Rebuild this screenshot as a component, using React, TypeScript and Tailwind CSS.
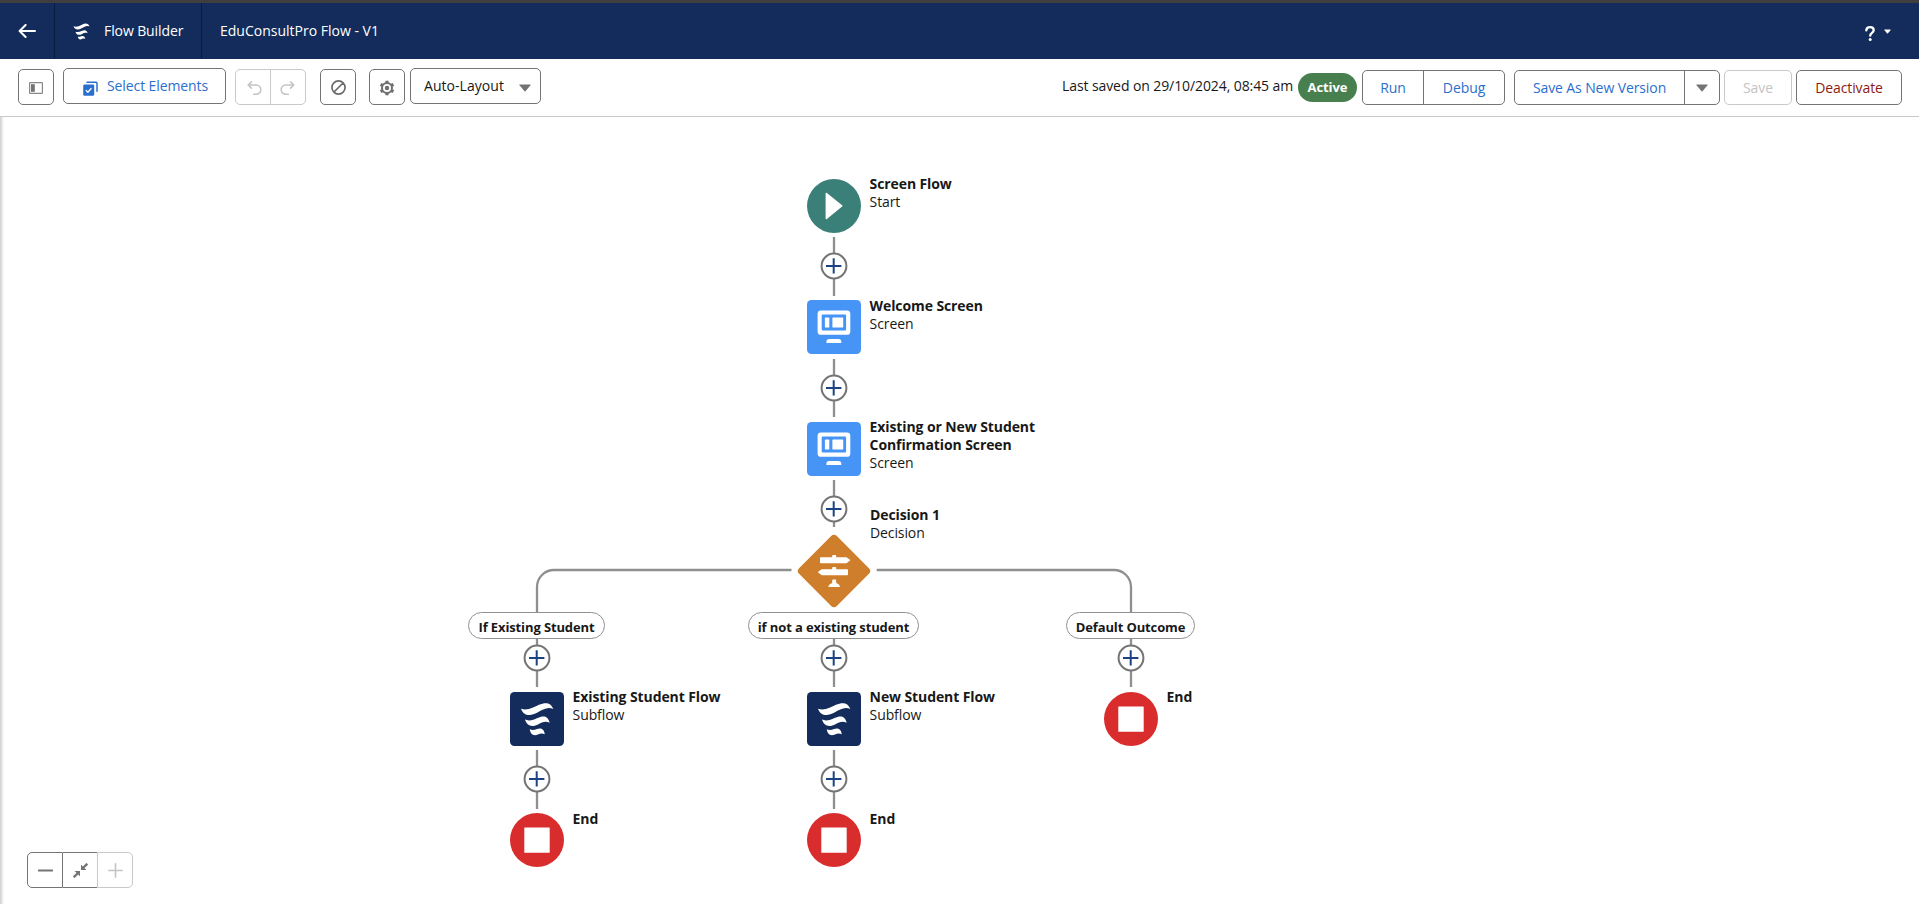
import type { ReactNode } from "react";

const WAVES = [
  "M11 16.7C17 19 24 15.5 29 12.8C35.5 10 41 10.5 43.3 17C37.5 14.5 33 17.5 27.5 20.5C20.5 24.5 13.5 24 11 16.7Z",
  "M15 27.6C19 29.3 23.5 28 27.5 26C33 23.5 38 23.5 39.7 30.8C35.5 28.6 32 30.3 28.5 32.2C22.5 35.5 17 34.5 15 27.6Z",
  "M19.7 37.3C22 38.3 24.5 38 27 37C30.5 35.8 34 36.5 34.8 42.3C32.5 41.3 30.5 41.3 28 42.5C23.5 44.5 20.5 42.5 19.7 37.3Z",
];

function Waves() {
  return (
    <>
      {WAVES.map((d) => (
        <path key={d} d={d} fill="#fff" />
      ))}
    </>
  );
}

function Caret({ className = "" }: { className?: string }) {
  return (
    <svg viewBox="0 0 12 8" className={`h-2 w-3 ${className}`}>
      <path d="M.9.4h10.2c.5 0 .7.5.4.9L6.5 7.3a.7.7 0 0 1-1 0L.5 1.3C.2.9.4.4.9.4Z" fill="currentColor" />
    </svg>
  );
}

type Kind = "start" | "screen" | "subflow" | "end";

function NodeIcon({ kind }: { kind: Kind }) {
  return (
    <svg viewBox="0 0 54 54" className="block h-[54px] w-[54px]">
      {kind === "start" && (
        <>
          <circle cx="27" cy="27" r="27" fill="#3a8079" />
          <path d="M18.6 14.6c0-.8.8-1 1.3-.6l15.2 12.2c.5.4.5 1 0 1.4L19.9 40c-.5.4-1.3.2-1.3-.6Z" fill="#fff" />
        </>
      )}
      {kind === "screen" && (
        <>
          <rect width="54" height="54" rx="4.5" fill="#4794f7" />
          <rect x="10.6" y="10.4" width="32.7" height="24.4" rx="3.4" fill="#fff" />
          <rect x="14.7" y="14.6" width="24.4" height="15.8" rx="1" fill="#4794f7" />
          <rect x="17.9" y="17.6" width="4.4" height="10" rx=".7" fill="#fff" />
          <rect x="25.4" y="17.6" width="10.8" height="10" rx=".7" fill="#fff" />
          <path d="M19.4 42.9v-1.2a2.8 2.8 0 0 1 2.8-2.8h9.3a2.8 2.8 0 0 1 2.8 2.8v1.2Z" fill="#fff" />
        </>
      )}
      {kind === "subflow" && (
        <>
          <rect width="54" height="54" rx="4.5" fill="#132c5b" />
          <Waves />
        </>
      )}
      {kind === "end" && (
        <>
          <circle cx="27" cy="27" r="27" fill="#d92d2d" />
          <rect x="14.3" y="14.4" width="25.4" height="25.4" rx=".6" fill="#fff" />
        </>
      )}
    </svg>
  );
}

function FlowNode({
  kind,
  title,
  sub,
  pos,
  label = "-mt-1",
}: {
  kind: Kind;
  title: ReactNode;
  sub?: string;
  pos: string;
  label?: string;
}) {
  return (
    <div className={`absolute flex ${pos}`}>
      <NodeIcon kind={kind} />
      <div className={`ml-[9px] leading-[18px] whitespace-nowrap ${label}`}>
        <div className="font-bold">{title}</div>
        {sub && <div>{sub}</div>}
      </div>
    </div>
  );
}

function Plus({ pos }: { pos: string }) {
  return (
    <svg viewBox="0 0 28 28" className={`absolute h-7 w-7 ${pos}`}>
      <circle cx="14" cy="14" r="12.4" fill="#fff" stroke="#747474" strokeWidth="2" />
      <path d="M13.7 6.2v15.4M6 13.9h15.4" stroke="#1b4384" strokeWidth="2" />
    </svg>
  );
}

function Pill({ pos, children }: { pos: string; children: ReactNode }) {
  return (
    <div
      className={`absolute flex h-[27px] items-center justify-center rounded-full border border-[#919191] bg-white pt-[3px] text-[13px] leading-[18px] font-bold tracking-[-0.12px] whitespace-nowrap ${pos}`}
    >
      {children}
    </div>
  );
}

const box = "flex items-center justify-center rounded-[5px] border border-[#747474] bg-white";

function Header() {
  return (
    <header className="flex h-[59px] items-stretch border-t-[3px] border-[#3f3f3f] bg-[#132c5b] text-white">
      <div className="flex w-[55px] items-center justify-center border-r border-[#071c42]">
        <svg viewBox="0 0 18 14" className="h-[14px] w-[18px]">
          <path d="M7.6 1 1.6 7l6 6M2 7h15" fill="none" stroke="#fff" strokeWidth="2" strokeLinecap="round" strokeLinejoin="round" />
        </svg>
      </div>
      <div className="flex w-[147px] items-center border-r border-[#071c42] pl-[18px]">
        <svg viewBox="10.5 10 33.4 34.4" className="h-[17px] w-[17px]">
          <Waves />
        </svg>
        <span className="mb-[2px] ml-[14px]">Flow Builder</span>
      </div>
      <div className="flex items-center pb-[2px] pl-[18px] tracking-[0px]">EduConsultPro Flow - V1</div>
      <div className="ml-auto flex items-center pt-[4px] pr-[28px]">
        <svg viewBox="0 0 10 15" className="h-[15px] w-[10px]">
          <path d="M1.3 4.3C1.5 2.3 3 1.2 5 1.2c2.2 0 3.7 1.2 3.7 3 0 2.6-3.5 2.7-3.5 5.5" fill="none" stroke="#fff" strokeWidth="2.3" strokeLinecap="round" />
          <circle cx="5.2" cy="13.4" r="1.5" fill="#fff" />
        </svg>
        <Caret className="mb-[3px] ml-[9px] h-[5px]! w-[7px]!" />
      </div>
    </header>
  );
}

function Toolbar() {
  return (
    <div className="flex h-[58px] items-start border-b border-[#c9c9c9] bg-white pr-[17px] pl-[18px]">
      <div className={`mt-[10px] h-9 w-9 ${box}`}>
        <svg viewBox="0 0 14 12" className="mt-[2px] h-3 w-[14px] text-[#747474]">
          <rect x=".6" y=".6" width="12.8" height="10.8" rx=".6" fill="none" stroke="currentColor" strokeWidth="1.2" opacity=".85" />
          <rect x="2" y="2.2" width="3.8" height="7.6" fill="currentColor" />
        </svg>
      </div>
      <div className={`mt-[9px] ml-[9px] h-9 w-[163px] justify-start! pl-[19px] text-[#2b6fce] ${box}`}>
        <svg viewBox="0 0 15 15" className="mt-[4px] h-[15px] w-[15px]">
          <path d="M4 1.2h9a1 1 0 0 1 1 1v8" fill="none" stroke="currentColor" strokeWidth="1.5" strokeLinecap="round" />
          <rect x=".2" y="3.6" width="11" height="11.2" rx="1.4" fill="currentColor" />
          <path d="m2.9 9.3 2 2 3.5-4" fill="none" stroke="#fff" strokeWidth="1.3" />
        </svg>
        <span className="-mt-px ml-[9px]">Select Elements</span>
      </div>
      <div className="mt-[10px] ml-[9px] flex h-9 w-[71px] rounded-[5px] border border-[#c9c9c9] text-[#c4c4c4]">
        <div className="flex w-[35px] items-center justify-center border-r border-[#c9c9c9]">
          <svg viewBox="0 0 15 15" className="mt-[2px] ml-[2px] h-[15px] w-[15px]">
            <path d="M4.4.9 1.2 4l3.2 3.1M1.6 4h7.6a4.6 4.6 0 0 1 0 9.2H6.7" fill="none" stroke="currentColor" strokeWidth="1.6" strokeLinecap="round" strokeLinejoin="round" />
          </svg>
        </div>
        <div className="flex flex-1 items-center justify-center">
          <svg viewBox="0 0 15 15" className="mt-[2px] mr-[2px] h-[15px] w-[15px]">
            <path d="M10.6.9 13.8 4l-3.2 3.1M13.4 4H5.8a4.6 4.6 0 0 0 0 9.2h2.5" fill="none" stroke="currentColor" strokeWidth="1.6" strokeLinecap="round" strokeLinejoin="round" />
          </svg>
        </div>
      </div>
      <div className={`mt-[10px] ml-[14px] h-9 w-9 ${box}`}>
        <svg viewBox="0 0 16 16" className="mt-px h-[15px] w-[15px]">
          <path d="M8 1a7 7 0 1 0 0 14A7 7 0 0 0 8 1ZM3.2 12.8 12.8 3.2" fill="none" stroke="#6b6b6b" strokeWidth="1.8" />
        </svg>
      </div>
      <div className={`mt-[10px] ml-[13px] h-9 w-9 ${box}`}>
        <svg viewBox="0 0 16 16" className="mt-px h-[16px] w-[16px] text-[#6f6f6f]">
          <path d="M8 3a5 5 0 1 0 0 10A5 5 0 0 0 8 3Z" fill="none" stroke="currentColor" strokeWidth="2" />
          <g stroke="currentColor" strokeWidth="3.2">
            <path d="M8 .8v2M8 13.2v2M1.6 4.3l1.9 1.1M12.5 10.6l1.9 1.1M1.6 11.7l1.9-1.1M12.5 5.400l1.900-1.100" />
          </g>
          <circle cx="8" cy="8" r="2.2" fill="currentColor" />
        </svg>
      </div>
      <div className={`mt-[9px] ml-[5px] h-9 w-[131px] justify-between! pr-[9px] pl-[13px] ${box}`}>
        <span className="-mt-px tracking-[0.05px]">Auto-Layout</span>
        <Caret className="mt-[3px] text-[#747474]" />
      </div>

      <div className="mt-[18px] ml-auto w-[236px] leading-[18px] tracking-[-0.09px] whitespace-nowrap">
        Last saved on 29/10/2024, 08:45 am
      </div>
      <div className="mt-[14px] flex h-[29px] w-[59px] items-center justify-center rounded-full bg-[#47804e] pt-px text-[13px] font-bold tracking-[-0.06px] text-white">
        Active
      </div>
      <div className="mt-[11px] ml-[5px] flex h-[35px] w-[143px] rounded-[5px] border border-[#747474] text-[#2b6fce]">
        <div className="flex w-[61px] items-center justify-center border-r border-[#747474]">Run</div>
        <div className="flex flex-1 items-center justify-center">Debug</div>
      </div>
      <div className="mt-[11px] ml-[9px] flex h-[35px] w-[206px] rounded-[5px] border border-[#747474] text-[#2b6fce]">
        <div className="flex w-[170px] items-center justify-center border-r border-[#747474]">Save As New Version</div>
        <div className="flex flex-1 items-center justify-center text-[#747474]">
          <Caret className="mt-px" />
        </div>
      </div>
      <div className="mt-[11px] ml-[4px] flex h-[35px] w-[68px] items-center justify-center rounded-[5px] border border-[#c9c9c9] text-[#c4c4c4]">
        Save
      </div>
      <div className={`mt-[11px] ml-[4px] h-[35px]! w-[106px] text-[#8c1b13] ${box}`}>Deactivate</div>
    </div>
  );
}

function Connectors() {
  return (
    <svg viewBox="0 0 1919 787" className="absolute top-0 left-0 h-[787px] w-[1919px]">
      <g fill="none" stroke="#8f8f8f" strokeWidth="2.3">
        <path d="M834 120v59M834 242v58M834 363v47M834 520v50M834 633v59M537 633v59M537 520v50M1131 520v50" />
        <path d="M791.5 453H554a17 17 0 0 0-17 17v28M876.7 453H1114a17 17 0 0 1 17 17v28" />
      </g>
    </svg>
  );
}

function Canvas() {
  return (
    <main className="relative h-[787px] overflow-hidden bg-white">
      <div className="absolute inset-y-0 left-0 w-[4px] bg-linear-to-r from-[#cfcfcf] to-white" />
      <Connectors />

      <FlowNode kind="start" title="Screen Flow" sub="Start" pos="left-[806.6px] top-[61.6px]" />
      <Plus pos="left-[820px] top-[135px]" />
      <FlowNode kind="screen" title="Welcome Screen" sub="Screen" pos="left-[806.6px] top-[183px]" label="-mt-[3px]" />
      <Plus pos="left-[820px] top-[256.6px]" />
      <FlowNode
        kind="screen"
        title={
          <>
            Existing or New Student
            <br />
            Confirmation Screen
          </>
        }
        sub="Screen"
        pos="left-[806.6px] top-[305px]"
      />
      <Plus pos="left-[820px] top-[378px]" />

      <Pill pos="left-[468px] top-[495px] w-[137px]">If Existing Student</Pill>
      <Pill pos="left-[748px] top-[495px] w-[171px]">if not a existing student</Pill>
      <Pill pos="left-[1066px] top-[495px] w-[129px]">Default Outcome</Pill>

      <svg viewBox="0 0 86 86" className="absolute top-[411px] left-[791px] h-[86px] w-[86px]">
        <rect x="16.3" y="16.3" width="53.4" height="53.4" rx="4" transform="rotate(45 43 43)" fill="#cf7e2b" stroke="#fff" strokeWidth="8" paintOrder="stroke" />
        <g fill="#fff" transform="translate(-791 -528)">
          <path d="M832.2 557.2v-1.4q0-.8.8-.8h2.4q.8 0 .8.8v1.4h10.3l3.5 2.6q.5.4 0 .8l-3.5 2.700h-25.700q-.8 0-.8-.8v-4.500q0-.8.8-.8Z" />
          <path d="M832.2 569.2v-1.4q0-.8.8-.8h2.4q.8 0 .8.8v1.4h11q.8 0 .8.8v4.4q0 .8-.8.8h-25.5l-3.5-2.6q-.5-.4 0-.8l3.5-2.6Z" />
          <path d="M832.2 583v-2.600q0-.8.8-.8h2.4q.8 0 .8.8v2.600q3 .7 3.800 3.300.2.800-.6.800h-10.400q-.8 0-.6-.8.800-2.600 3.800-3.300Z" />
        </g>
      </svg>
      <div className="absolute top-[389px] left-[870px] leading-[18px]">
        <div className="font-bold">Decision 1</div>
        <div>Decision</div>
      </div>

      <Plus pos="left-[523px] top-[526.6px]" />
      <Plus pos="left-[820px] top-[526.6px]" />
      <Plus pos="left-[1117px] top-[526.6px]" />
      <FlowNode kind="subflow" title="Existing Student Flow" sub="Subflow" pos="left-[509.6px] top-[575px]" />
      <FlowNode kind="subflow" title="New Student Flow" sub="Subflow" pos="left-[806.6px] top-[575px]" />
      <FlowNode kind="end" title="End" pos="left-[1103.6px] top-[575px]" />
      <Plus pos="left-[523px] top-[648px]" />
      <Plus pos="left-[820px] top-[648px]" />
      <FlowNode kind="end" title="End" pos="left-[509.6px] top-[696px]" label="-mt-[3px]" />
      <FlowNode kind="end" title="End" pos="left-[806.6px] top-[696px]" label="-mt-[3px]" />

      <div className="absolute top-[735px] left-[27px] flex h-9 text-[#747474]">
        <div className="flex w-9 items-center justify-center rounded-l-[5px] border border-[#747474]">
          <svg viewBox="0 0 15 15" className="mt-px h-[15px] w-[15px]">
            <path d="M.7 7.5h13.6" stroke="currentColor" strokeWidth="1.9" strokeLinecap="round" />
          </svg>
        </div>
        <div className="flex w-[34px] items-center justify-center border-y border-[#747474]">
          <svg viewBox="0 0 15 15" className="mt-px h-[15px] w-[15px]" fill="currentColor">
            <path d="M8 1.7v5.3h5.4l-1.900-1.900L14.800 2a.6.6 0 0 0 0-.8l-.9-.9a.6.6 0 0 0-.8 0L9.900 3.500Z" />
            <path d="M7 13.3V8H1.600l1.900 1.900L.2 13a.6.6 0 0 0 0 .8l.9.9a.6.6 0 0 0 .8 0l3.200-3.200Z" />
          </svg>
        </div>
        <div className="flex w-9 items-center justify-center rounded-r-[5px] border border-[#c9c9c9] text-[#c4c4c4]">
          <svg viewBox="0 0 15 15" className="mt-px h-[15px] w-[15px]">
            <path d="M.8 7.5h13.4M7.5.8v13.4" stroke="currentColor" strokeWidth="1.6" strokeLinecap="round" />
          </svg>
        </div>
      </div>
    </main>
  );
}

export default function App() {
  return (
    <div className="h-[904px] w-[1919px] overflow-hidden bg-white font-['Open_Sans','Noto_Sans',sans-serif] text-[14px] tracking-[-0.1px] text-[#181818]">
      <Header />
      <Toolbar />
      <Canvas />
    </div>
  );
}
